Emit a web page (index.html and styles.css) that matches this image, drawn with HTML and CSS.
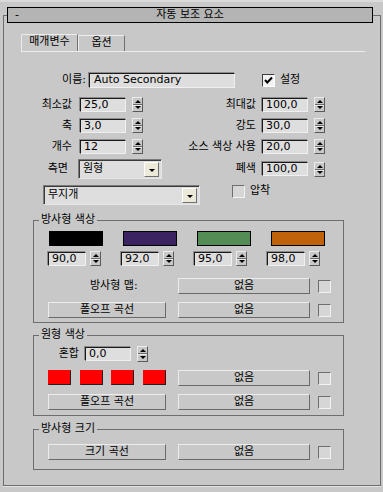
FILE: index.html
```html
<!DOCTYPE html>
<html lang="ko">
<head>
  <meta charset="UTF-8">
  <title>자동 보조 요소</title>
  <link rel="stylesheet" href="styles.css">
</head>
<body>
  <div class="rollout">
    <div class="rollout-title">
      <span class="collapse">-</span>
      <span class="title-text">자동 보조 요소</span>
    </div>

    <div class="tabs">
      <div class="tab active">매개변수</div>
      <div class="tab second">옵션</div>
    </div>

    <div class="name-row">
      <span class="lbl name-lbl">이름:</span>
      <span class="field name-field">Auto Secondary</span>
      <span class="check checked">
        <svg width="9" height="9" viewBox="0 0 9 9"><path d="M1 4 L3.3 6.5 L8 1.5" fill="none" stroke="#000" stroke-width="2"/></svg>
      </span>
      <span class="check-text">설정</span>
    </div>

    <div class="pair-row first">
      <span class="lbl lbl-l">최소값</span><span class="field num">25,0</span><span class="spin"></span>
      <span class="lbl lbl-r">최대값</span><span class="field num">100,0</span><span class="spin"></span>
    </div>
    <div class="pair-row">
      <span class="lbl lbl-l">축</span><span class="field num">3,0</span><span class="spin"></span>
      <span class="lbl lbl-r">강도</span><span class="field num">30,0</span><span class="spin"></span>
    </div>
    <div class="pair-row">
      <span class="lbl lbl-l">개수</span><span class="field num">12</span><span class="spin"></span>
      <span class="lbl lbl-r">소스 색상 사용</span><span class="field num">20,0</span><span class="spin"></span>
    </div>
    <div class="side-row">
      <span class="lbl side-lbl">측면</span>
      <div class="combo side-combo"><span class="combo-text">원형</span><span class="combo-btn"></span></div>
      <span class="lbl side-lbl-r">폐색</span><span class="field num">100,0</span><span class="spin"></span>
    </div>
    <div class="rainbow-row">
      <div class="combo rainbow-combo"><span class="combo-text">무지개</span><span class="combo-btn"></span></div>
      <span class="check squeeze"></span>
      <span class="check-text">압착</span>
    </div>

    <fieldset class="group radial-color">
      <legend>방사형 색상</legend>
      <div class="g-body">
        <div class="sw-row">
          <span class="swatch" style="background:#000000"></span>
          <span class="swatch" style="background:#3a2360"></span>
          <span class="swatch" style="background:#548c56"></span>
          <span class="swatch" style="background:#bf620a"></span>
        </div>
        <div class="fd-row">
          <div class="mini"><span class="field num">90,0</span><span class="spin"></span></div>
          <div class="mini"><span class="field num">92,0</span><span class="spin"></span></div>
          <div class="mini"><span class="field num">95,0</span><span class="spin"></span></div>
          <div class="mini"><span class="field num">98,0</span><span class="spin"></span></div>
        </div>
        <div class="btn-row map-row">
          <span class="map-lbl">방사형 맵:</span>
          <span class="btn btn-none">없음</span>
          <span class="check small"></span>
        </div>
        <div class="btn-row">
          <span class="btn btn-curve">폴오프 곡선</span>
          <span class="btn btn-none">없음</span>
          <span class="check small"></span>
        </div>
      </div>
    </fieldset>

    <fieldset class="group circ-color">
      <legend>원형 색상</legend>
      <div class="g-body">
        <div class="mix-row">
          <span class="lbl mix-lbl">혼합</span><span class="field num">0,0</span><span class="spin tall"></span>
        </div>
        <div class="btn-row">
          <div class="reds">
            <span class="red"></span><span class="red"></span><span class="red"></span><span class="red"></span>
          </div>
          <span class="btn btn-none">없음</span>
          <span class="check small"></span>
        </div>
        <div class="btn-row">
          <span class="btn btn-curve">폴오프 곡선</span>
          <span class="btn btn-none">없음</span>
          <span class="check small"></span>
        </div>
      </div>
    </fieldset>

    <fieldset class="group radial-size">
      <legend>방사형 크기</legend>
      <div class="g-body">
        <div class="btn-row">
          <span class="btn btn-curve">크기 곡선</span>
          <span class="btn btn-none">없음</span>
          <span class="check small"></span>
        </div>
      </div>
    </fieldset>
  </div>
</body>
</html>
```

FILE: styles.css
```css
* {
  box-sizing: border-box;
}
body {
  margin: 0;
  height: 492px;
  overflow: hidden;
  background: #c8c8c8;
  border-top: 2px solid #dadada;
  font-family: "DejaVu Sans", "Noto Sans CJK KR", sans-serif;
  font-size: 11px;
  line-height: 14px;
  color: #000;
}
.rollout {
  margin: 13px 2px 0 3px;
  height: 471px;
  border: 1px solid #6e6e6e;
  box-shadow: 0 1px 0 #e4e4e4;
}
.rollout-title {
  margin: -9px 7px 0 3px;
  height: 16px;
  border: 1px solid #000;
  background: #b4b4b4;
  display: grid;
  grid-template-columns: 20px 1fr 20px;
  align-items: center;
}
.collapse {
  padding-left: 7px;
}
.title-text {
  text-align: center;
}

/* tabs */
.tabs {
  display: flex;
  align-items: flex-end;
  margin: 11px 0 0 17px;
  width: 344px;
  height: 18px;
  border-bottom: 1px solid #ececec;
}
.tab {
  height: 16px;
  border: 1px solid;
  border-color: #ececec #707070 transparent #ececec;
  border-bottom: none;
  text-align: center;
  line-height: 14px;
}
.tab.active {
  width: 57px;
  height: 17px;
  border-top-left-radius: 2px;
}
.tab.second {
  width: 47px;
}

/* labels, fields */
.lbl {
  text-align: right;
  white-space: nowrap;
  flex-shrink: 0;
}
.field {
  display: block;
  flex-shrink: 0;
  height: 14px;
  padding-left: 3px;
  background: #dedede;
  border: 1px solid;
  border-color: #1a1a1a #f0f0f0 #f0f0f0 #1a1a1a;
  box-shadow: -1px -1px 0 #8c8c8c;
  line-height: 12px;
  white-space: nowrap;
  overflow: hidden;
}
.num {
  width: 46px;
}
.spin {
  flex-shrink: 0;
  width: 11px;
  height: 15px;
  margin-left: 6px;
  border: 1px solid;
  border-color: #ececec #5a5a5a #5a5a5a #ececec;
  background: linear-gradient(#c8c8c8 6px, #6a6a6a 6px, #6a6a6a 7px, #ececec 7px, #ececec 8px, #c8c8c8 8px);
  display: flex;
  flex-direction: column;
  justify-content: space-between;
  align-items: center;
  padding: 2px 0 2px;
}
.spin::before {
  content: "";
  border-left: 3px solid transparent;
  border-right: 3px solid transparent;
  border-bottom: 3px solid #000;
}
.spin::after {
  content: "";
  border-left: 3px solid transparent;
  border-right: 3px solid transparent;
  border-top: 3px solid #000;
}
.spin.tall {
  height: 16px;
  background: linear-gradient(#c8c8c8 6px, #6a6a6a 6px, #6a6a6a 7px, #ececec 7px, #ececec 8px, #c8c8c8 8px);
}

/* checkboxes */
.check {
  flex-shrink: 0;
  width: 13px;
  height: 13px;
  border: 1px solid;
  border-color: #6e6e6e #f2f2f2 #f2f2f2 #6e6e6e;
  background: #d6d6d6;
  display: flex;
  align-items: center;
  justify-content: center;
}
.check.checked {
  background: #f2f2f2;
  border-color: #3c3c3c #ffffff #ffffff #3c3c3c;
}
.check-text {
  margin-left: 5px;
}

/* top rows */
.name-row {
  display: flex;
  align-items: center;
  margin-top: 20px;
  height: 16px;
}
.name-lbl {
  width: 82px;
}
.name-field {
  width: 146px;
  height: 15px;
  margin-left: 3px;
  padding-left: 4px;
}
.name-row .check {
  margin-left: 27px;
}
.pair-row {
  display: flex;
  align-items: center;
  margin-top: 6px;
  height: 15px;
}
.pair-row.first {
  margin-top: 9px;
}
.lbl-l {
  width: 68px;
  margin-right: 8px;
}
.lbl-r {
  width: 113px;
  margin-right: 6px;
}
.side-row {
  display: flex;
  align-items: center;
  margin-top: 5px;
  height: 20px;
}
.side-lbl {
  width: 64px;
  margin-right: 10px;
}
.side-lbl-r {
  width: 94px;
  margin-right: 6px;
}
.rainbow-row {
  display: flex;
  align-items: flex-start;
  margin-top: 6px;
  height: 20px;
}
.rainbow-row .check {
  margin-left: 32px;
}
.rainbow-row .check-text {
  margin-top: -1px;
}

/* dropdowns */
.combo {
  flex-shrink: 0;
  display: flex;
  align-items: center;
  height: 20px;
  border: 1px solid;
  border-color: #7a7a7a #e6e6e6 #e6e6e6 #7a7a7a;
  background: #dedede;
  box-shadow: inset 1px 1px 0 #3a3a3a;
  padding: 1px 2px 1px 4px;
}
.combo-text {
  flex: 1;
}
.combo-btn {
  width: 15px;
  height: 15px;
  background: #ece9d8;
  border: 1px solid;
  border-color: #ffffff #707070 #707070 #ffffff;
  display: flex;
  align-items: center;
  justify-content: center;
}
.combo-btn::after {
  content: "";
  margin-top: 2px;
  border-left: 3px solid transparent;
  border-right: 3px solid transparent;
  border-top: 3px solid #000;
}
.side-combo {
  width: 84px;
}
.rainbow-combo {
  width: 157px;
  margin-left: 39px;
}

/* group boxes */
.group {
  width: 311px;
  margin: 0 0 0 29px;
  padding: 0 0 4px 0;
  border: 1px solid #6e6e6e;
  min-inline-size: 0;
}
.group legend {
  margin-left: 5px;
  padding: 0 2px;
  line-height: 14px;
}
.g-body {
  padding-left: 14px;
}
.radial-color {
  margin-top: 8px;
}
.circ-color {
  margin-top: 5px;
  padding-bottom: 5px;
}
.radial-size {
  margin-top: 6px;
  padding-bottom: 9px;
}
.sw-row {
  display: flex;
  gap: 20px;
  margin-top: 4px;
  padding-left: 1px;
  height: 15px;
}
.swatch {
  width: 54px;
  height: 15px;
  border: 1px solid #000;
}
.fd-row {
  display: flex;
  gap: 20px;
  margin-top: 5px;
  height: 15px;
}
.mini {
  display: flex;
  align-items: center;
}
.mini .field {
  width: 38px;
}
.mini .spin {
  margin-left: 4px;
}
.btn-row {
  display: flex;
  align-items: center;
  margin-top: 8px;
  height: 16px;
}
.map-row {
  margin-top: 12px;
}
.map-lbl {
  width: 130px;
  padding-left: 42px;
  flex-shrink: 0;
}
.btn {
  flex-shrink: 0;
  height: 16px;
  border: 1px solid;
  border-color: #ececec #6a6a6a #6a6a6a #ececec;
  background: #c8c8c8;
  text-align: center;
  line-height: 14px;
}
.btn-curve {
  width: 118px;
  margin-right: 12px;
}
.btn-none {
  width: 132px;
}
.check.small {
  margin-left: 8px;
}
.mix-row {
  display: flex;
  align-items: center;
  margin-top: 4px;
  height: 16px;
}
.mix-lbl {
  width: 22px;
  margin-left: 9px;
  margin-right: 6px;
}
.reds {
  display: flex;
  justify-content: space-between;
  align-self: flex-start;
  width: 118px;
  margin-right: 12px;
}
.red {
  width: 23px;
  height: 15px;
  background: #ff0000;
  border: 1px solid;
  border-color: #ff0000 #202020 #202020 #ff0000;
}
```
